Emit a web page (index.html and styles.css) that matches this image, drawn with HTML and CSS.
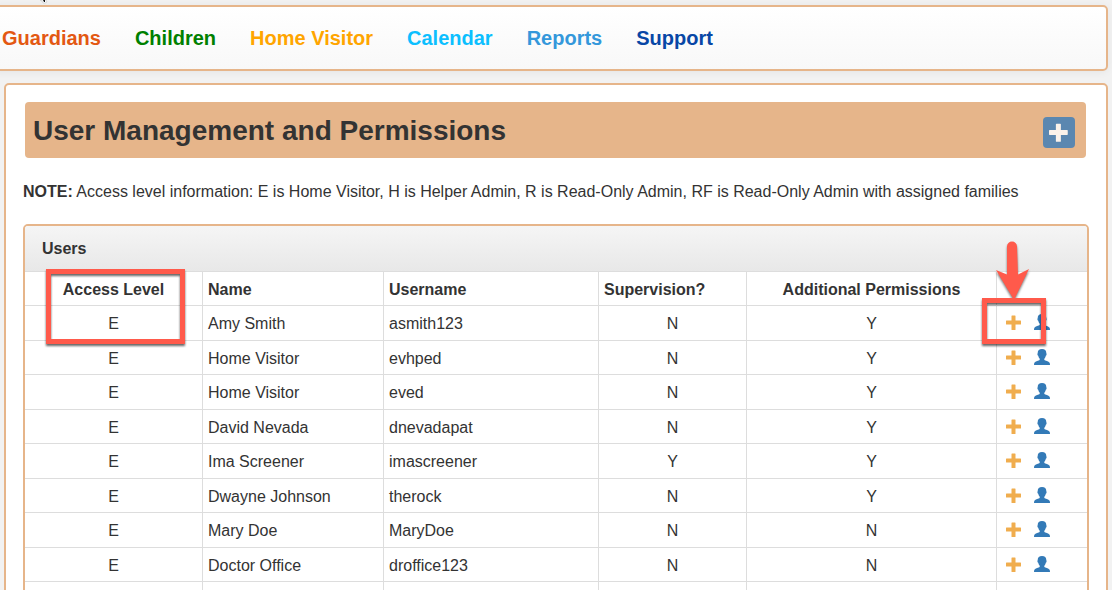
FILE: index.html
```
<!DOCTYPE html>
<html lang="en">
<head>
<meta charset="utf-8">
<meta name="viewport" content="width=device-width, initial-scale=1.0">
<title>User Management and Permissions</title>
<link rel="stylesheet" href="styles.css">
</head>
<body>
<!-- icons used in the table and the page header -->
<svg class="sprite" aria-hidden="true">
    <symbol id="icon-plus" viewBox="0 0 16 16">
        <path d="M6 .5h3q.5 0 .5.500v4.500h5q.5 0 .5.500v3q0 .5-.5.500h-5v5q0 .5-.5.500h-3q-.5 0-.5-.5v-5h-5q-.5 0-.5-.5v-3q0-.5.5-.5h5v-4.500q0-.5.5-.5z"/>
    </symbol>
    <symbol id="icon-user" viewBox="0 0 16 16">
        <path d="M8 0C5.200 0 3.700 1.400 3.700 4c0 .3-.3.600-.3 1.200 0 .8.300 1.300.8 1.500.3 1.400.8 2.300 1.500 3.100v1.200C4.900 11.700 1.300 12.300.4 13.800c-.3.600-.4 1.300-.4 2.200h16c0-.9-.1-1.600-.4-2.200-.9-1.500-4.500-2.100-5.300-2.800V9.800c.7-.8 1.200-1.700 1.500-3.100.5-.2.800-.7.800-1.500 0-.6-.3-.9-.3-1.200C12.300 1.400 10.800 0 8 0z"/>
    </symbol>
</svg>
<svg class="pointer" viewBox="0 0 10 4" aria-hidden="true">
    <path d="M1 0l2 1 1 2h2L8 2 7 0z" fill="#fff" stroke="#bbb" stroke-width=".5"/>
    <path d="M4 0h2v2H5z" fill="#111"/>
</svg>

<nav class="navbar">
    <a class="nav-guardians" href="#">Guardians</a>
    <a class="nav-children" href="#">Children</a>
    <a class="nav-visitor" href="#">Home Visitor</a>
    <a class="nav-calendar" href="#">Calendar</a>
    <a class="nav-reports" href="#">Reports</a>
    <a class="nav-support" href="#">Support</a>
</nav>

<main class="content">
    <div class="page-header">
        <h1>User Management and Permissions</h1>
        <button class="btn-add" type="button" aria-label="Add user"><svg><use href="#icon-plus"/></svg></button>
    </div>
    <p class="note"><strong>NOTE:</strong> Access level information: E is Home Visitor, H is Helper Admin, R is Read-Only Admin, RF is Read-Only Admin with assigned families</p>

    <section class="panel">
        <h2 class="panel-heading">Users</h2>
        <table class="users">
            <colgroup>
                <col class="col-level">
                <col class="col-name">
                <col class="col-username">
                <col class="col-supervision">
                <col>
                <col class="col-actions">
            </colgroup>
            <thead>
                <tr>
                    <th class="center">Access Level</th>
                    <th>Name</th>
                    <th>Username</th>
                    <th>Supervision?</th>
                    <th class="center">Additional Permissions</th>
                    <th></th>
                </tr>
            </thead>
            <tbody>
                <tr>
                    <td class="center">E</td><td>Amy Smith</td><td>asmith123</td><td class="center">N</td><td class="center">Y</td>
                    <td><div class="actions"><a class="add" href="#" aria-label="Add permission"><svg><use href="#icon-plus"/></svg></a><a class="user" href="#" aria-label="User profile"><svg><use href="#icon-user"/></svg></a></div></td>
                </tr>
                <tr>
                    <td class="center">E</td><td>Home Visitor</td><td>evhped</td><td class="center">N</td><td class="center">Y</td>
                    <td><div class="actions"><a class="add" href="#" aria-label="Add permission"><svg><use href="#icon-plus"/></svg></a><a class="user" href="#" aria-label="User profile"><svg><use href="#icon-user"/></svg></a></div></td>
                </tr>
                <tr>
                    <td class="center">E</td><td>Home Visitor</td><td>eved</td><td class="center">N</td><td class="center">Y</td>
                    <td><div class="actions"><a class="add" href="#" aria-label="Add permission"><svg><use href="#icon-plus"/></svg></a><a class="user" href="#" aria-label="User profile"><svg><use href="#icon-user"/></svg></a></div></td>
                </tr>
                <tr>
                    <td class="center">E</td><td>David Nevada</td><td>dnevadapat</td><td class="center">N</td><td class="center">Y</td>
                    <td><div class="actions"><a class="add" href="#" aria-label="Add permission"><svg><use href="#icon-plus"/></svg></a><a class="user" href="#" aria-label="User profile"><svg><use href="#icon-user"/></svg></a></div></td>
                </tr>
                <tr>
                    <td class="center">E</td><td>Ima Screener</td><td>imascreener</td><td class="center">Y</td><td class="center">Y</td>
                    <td><div class="actions"><a class="add" href="#" aria-label="Add permission"><svg><use href="#icon-plus"/></svg></a><a class="user" href="#" aria-label="User profile"><svg><use href="#icon-user"/></svg></a></div></td>
                </tr>
                <tr>
                    <td class="center">E</td><td>Dwayne Johnson</td><td>therock</td><td class="center">N</td><td class="center">Y</td>
                    <td><div class="actions"><a class="add" href="#" aria-label="Add permission"><svg><use href="#icon-plus"/></svg></a><a class="user" href="#" aria-label="User profile"><svg><use href="#icon-user"/></svg></a></div></td>
                </tr>
                <tr>
                    <td class="center">E</td><td>Mary Doe</td><td>MaryDoe</td><td class="center">N</td><td class="center">N</td>
                    <td><div class="actions"><a class="add" href="#" aria-label="Add permission"><svg><use href="#icon-plus"/></svg></a><a class="user" href="#" aria-label="User profile"><svg><use href="#icon-user"/></svg></a></div></td>
                </tr>
                <tr>
                    <td class="center">E</td><td>Doctor Office</td><td>droffice123</td><td class="center">N</td><td class="center">N</td>
                    <td><div class="actions"><a class="add" href="#" aria-label="Add permission"><svg><use href="#icon-plus"/></svg></a><a class="user" href="#" aria-label="User profile"><svg><use href="#icon-user"/></svg></a></div></td>
                </tr>
                <tr>
                    <td></td><td></td><td></td><td></td><td></td><td></td>
                </tr>
            </tbody>
        </table>

        <!-- callouts -->
        <div class="callout callout-level"></div>
        <svg class="callout-arrow" viewBox="0 0 34 60" aria-hidden="true">
            <path d="M11 5.500a5 5 0 0 1 10 0L22 33.500 33 28 18 59 0 29l11 4.500z"/>
        </svg>
        <div class="callout callout-add"></div>
    </section>
</main>
</body>
</html>
```

FILE: styles.css
```
* {
    margin: 0;
    padding: 0;
    box-sizing: border-box;
}

body {
    font-family: "Helvetica Neue", "Liberation Sans", Arial, sans-serif;
    font-size: 16px;
    line-height: 22px;
    color: #333;
    background: #f2f2f2;
    height: 100vh;
    padding: 5px 4px 0;
    overflow: hidden;
}

a {
    text-decoration: none;
}

svg {
    display: block;
    width: 16px;
    height: 16px;
    fill: currentColor;
}

.sprite {
    display: none;
}

.pointer {
    position: absolute;
    top: 0;
    left: 39px;
    width: 10px;
    height: 4px;
}

/* Navigation */
.navbar {
    display: flex;
    align-items: center;
    gap: 34px;
    height: 66px;
    margin-left: -12px;
    padding-left: 8px;
    border: 2px solid #e6b58a;
    border-radius: 5px;
    background: linear-gradient(#fff, #f8f8f8);
    box-shadow: 0 1px 8px rgba(0, 0, 0, 0.06);
    font-size: 20px;
    font-weight: bold;
}

.nav-guardians {
    color: #e35812;
}

.nav-children {
    color: #008000;
}

.nav-visitor {
    color: #ffa500;
}

.nav-calendar {
    color: #0cbfff;
}

.nav-reports {
    color: #3498db;
}

.nav-support {
    color: #0847a6;
}

/* Content */
.content {
    margin-top: 12px;
    padding: 17px 17px 20px;
    border: 2px solid #e6b58a;
    border-radius: 5px;
    background: #fff;
}

.page-header {
    display: flex;
    align-items: center;
    justify-content: space-between;
    height: 56px;
    margin: 0 3px 0 2px;
    padding: 2px 11px 0 8px;
    border-radius: 4px;
    background: #e6b58a;
}

.page-header h1 {
    font-size: 28px;
    line-height: 32px;
}

.btn-add {
    display: flex;
    align-items: center;
    justify-content: center;
    width: 32px;
    height: 31px;
    margin-top: 3px;
    border: none;
    border-radius: 4px;
    background: #5b87b0;
    color: #fbf2ea;
    cursor: pointer;
}

.btn-add svg {
    width: 20px;
    height: 20px;
}

.note {
    margin: 23px 0 21px;
}

/* Users table */
.panel {
    position: relative;
    border: 2px solid #e6b58a;
    border-radius: 5px;
}

.panel-heading {
    height: 46px;
    padding-left: 17px;
    border-bottom: 1px solid #ddd;
    border-radius: 3px 3px 0 0;
    background: linear-gradient(#f5f5f5, #e8e8e8);
    font-size: 16px;
    line-height: 45px;
}

.users {
    width: 100%;
    table-layout: fixed;
    border-collapse: separate;
    border-spacing: 0;
}

.col-level {
    width: 178px;
}

.col-name {
    width: 181px;
}

.col-username {
    width: 215px;
}

.col-supervision {
    width: 148px;
}

.col-actions {
    width: 90px;
}

.users th,
.users td {
    height: 34px;
    padding: 2px 5px 0;
    border-right: 1px solid #ddd;
    border-bottom: 1px solid #ddd;
    text-align: left;
    vertical-align: middle;
}

.users tbody tr:nth-child(odd) td {
    height: 35px;
}

.users th:last-child,
.users td:last-child {
    border-right: none;
}

.users .center {
    text-align: center;
}

.actions {
    display: flex;
    gap: 12px;
    padding: 0 0 3px 4px;
}

.add {
    padding-top: 1px;
    color: #f0ad4e;
}

.user {
    color: #337ab7;
}

/* Callouts */
.callout {
    position: absolute;
    border: 5px solid #ff5a4b;
    filter: drop-shadow(0 2px 1px rgba(0, 0, 0, 0.6));
}

.callout-level {
    top: 43px;
    left: 21px;
    width: 139px;
    height: 75px;
}

.callout-add {
    top: 72px;
    right: 41px;
    width: 64px;
    height: 46px;
}

.callout-arrow {
    position: absolute;
    top: 15px;
    right: 57px;
    width: 34px;
    height: 60px;
    fill: #ff5a4b;
    filter: drop-shadow(0 2px 1px rgba(0, 0, 0, 0.5));
}
```
